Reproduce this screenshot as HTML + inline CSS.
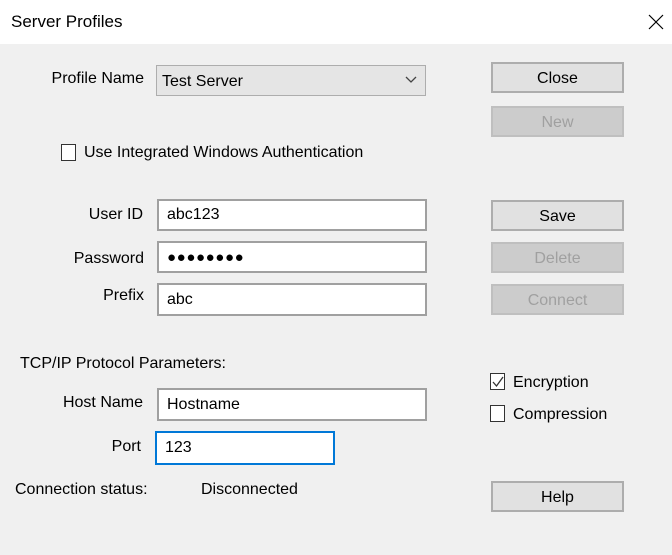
<!DOCTYPE html>
<html><head><style>
*{box-sizing:border-box;margin:0;padding:0}
body{width:672px;height:555px;background:#f0f0f0;font-family:"Liberation Sans",sans-serif;font-size:16px;color:#000;position:relative;overflow:hidden}
.a{position:absolute;white-space:nowrap}
.tb{position:absolute;left:0;top:0;width:672px;height:44px;background:#fff}
.in{position:absolute;background:#fff;border:2px solid #a0a0a0;padding-left:8px;display:flex;align-items:center}
.btn{position:absolute;left:491px;width:133px;height:31px;background:#e1e1e1;border:2px solid #adadad;display:flex;align-items:center;justify-content:center;padding-top:2px}
.dis{background:#cccccc;border-color:#bfbfbf;color:#a0a0a0}
.cb{position:absolute;width:15px;height:17px;border:1.5px solid #333;background:#fff}
.lbl{position:absolute;text-align:right;white-space:nowrap}
</style></head><body>
<div class="tb"></div>
<div class="a" style="left:11px;top:12px;font-size:17px">Server Profiles</div>
<svg class="a" style="left:648px;top:14px" width="16" height="16"><path d="M1 1L15 15M15 1L1 15" stroke="#000" stroke-width="1.2"/></svg>

<div class="lbl" style="right:528px;top:70px">Profile Name</div>
<div class="in" style="left:156px;top:65px;width:270px;height:31px;background:#e5e5e5;border-color:#adadad;border-width:1.5px;padding-left:5px;padding-top:3px">Test Server</div>
<svg class="a" style="left:405px;top:76px" width="12" height="8"><path d="M1 1L6 6L11 1" stroke="#444" fill="none" stroke-width="1.3"/></svg>

<div class="btn" style="top:62px">Close</div>
<div class="btn dis" style="top:106px">New</div>

<div class="cb" style="left:61px;top:144px"></div>
<div class="a" style="left:84px;top:144px">Use Integrated Windows Authentication</div>

<div class="lbl" style="right:529px;top:206px">User ID</div>
<div class="in" style="left:157px;top:199px;width:270px;height:32px">abc123</div>
<div class="lbl" style="right:528px;top:250px">Password</div>
<div class="in" style="left:157px;top:241px;width:270px;height:32px;font-size:15px;letter-spacing:0.6px">●●●●●●●●</div>
<div class="lbl" style="right:528px;top:287px">Prefix</div>
<div class="in" style="left:157px;top:283px;width:270px;height:33px">abc</div>

<div class="btn" style="top:200px">Save</div>
<div class="btn dis" style="top:242px">Delete</div>
<div class="btn dis" style="top:284px">Connect</div>

<div class="a" style="left:20px;top:355px">TCP/IP Protocol Parameters:</div>
<div class="lbl" style="right:529px;top:394px">Host Name</div>
<div class="in" style="left:157px;top:388px;width:270px;height:33px">Hostname</div>
<div class="lbl" style="right:531px;top:438px">Port</div>
<div class="in" style="left:155px;top:431px;width:180px;height:34px;border-color:#0078d7">123</div>

<div class="cb" style="left:490px;top:373px"></div>
<svg class="a" style="left:491px;top:375px" width="14" height="14"><path d="M2 7L5.5 11L12 2" stroke="#333" fill="none" stroke-width="1.3"/></svg>
<div class="a" style="left:513px;top:374px">Encryption</div>
<div class="cb" style="left:490px;top:405px"></div>
<div class="a" style="left:513px;top:406px">Compression</div>

<div class="a" style="left:15px;top:481px">Connection status:</div>
<div class="a" style="left:201px;top:481px">Disconnected</div>
<div class="btn" style="top:481px">Help</div>
</body></html>
